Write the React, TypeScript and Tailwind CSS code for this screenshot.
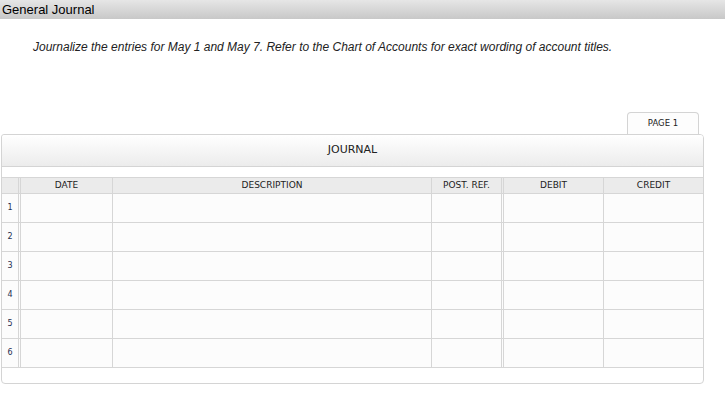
const columns = [
  { key: "date", label: "DATE", className: "ml-px w-[93px] border-l border-r" },
  { key: "desc", label: "DESCRIPTION", className: "w-[319px] border-r" },
  { key: "ref", label: "POST. REF.", className: "w-[70px] border-r" },
  { key: "debit", label: "DEBIT", className: "ml-px w-[101px] border-l border-r" },
  { key: "credit", label: "CREDIT", className: "w-[99px]" },
];

const rows = [1, 2, 3, 4, 5, 6];

function HeaderRow() {
  return (
    <div className="flex h-[16px] border-b border-[#d6d6d6] bg-[#ebebeb]">
      <div className="w-[17px] border-r border-[#d6d6d6]" />
      {columns.map((c) => (
        <div
          key={c.key}
          className={`${c.className} flex items-center justify-center border-[#d6d6d6] text-[9px] leading-none text-[#222]`}
        >
          {c.label}
        </div>
      ))}
    </div>
  );
}

function EntryRow({ n }: { n: number }) {
  return (
    <div className="flex h-[29px] border-b border-[#d6d6d6] bg-[#fcfcfc]">
      <div className="flex w-[17px] items-center justify-center border-r border-[#d6d6d6] text-[8px] text-[#1f2f4f]">
        {n}
      </div>
      {columns.map((c) => (
        <div key={c.key} className={`${c.className} border-[#d6d6d6]`} />
      ))}
    </div>
  );
}

export default function App() {
  return (
    <div className="h-[403px] w-[725px] bg-white font-['Liberation_Sans',Arial,sans-serif]">
      <div className="flex h-[19px] items-center bg-linear-to-b from-[#e6e6e6] to-[#c8c8c8] pl-[2px] text-[13px] text-black">
        General Journal
      </div>

      <p className="mt-[21px] pl-[33px] text-[12px] leading-[14px] text-[#222] italic">
        Journalize the entries for May 1 and May 7. Refer to the Chart of Accounts for exact wording of account titles.
      </p>

      <div className="mt-[58px] ml-px w-[703px] font-['DejaVu_Sans',sans-serif]">
        <div className="flex justify-end pr-[5px]">
          <div className="flex h-[22px] w-[72px] items-center justify-center rounded-t-[4px] border border-b-0 border-[#d4d4d4] bg-[#fdfdfd] text-[8.5px] text-[#222]">
            PAGE 1
          </div>
        </div>

        <div className="rounded-[4px] rounded-tl-[3px] border border-[#d4d4d4] bg-white">
          <div className="flex h-[32px] items-center justify-center rounded-t-[3px] border-b border-[#d4d4d4] bg-linear-to-b from-white to-[#ececec] text-[11px] text-[#222]">
            JOURNAL
          </div>
          <div className="mt-[10px] border-t border-[#d6d6d6]">
            <HeaderRow />
            {rows.map((n) => (
              <EntryRow key={n} n={n} />
            ))}
          </div>
          <div className="h-[15px]" />
        </div>
      </div>
    </div>
  );
}
